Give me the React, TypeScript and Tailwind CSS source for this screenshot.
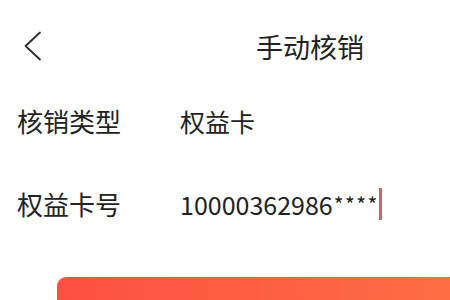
import React from 'react';

function BackIcon() {
    return (
        <svg width="20" height="30" viewBox="0 0 20 30" fill="none">
            <polyline points="17,1.5 2.5,15 17,28.5" stroke="#2b2b2b" strokeWidth="1.8" strokeLinecap="round" strokeLinejoin="round" />
        </svg>
    );
}

export default function App() {
    return (
        <div className="w-[450px] h-[300px] overflow-hidden bg-white">
            <div
                className="w-[620px] text-[#222]"
                style={{ fontFamily: '"Noto Sans CJK SC", "Noto Sans", sans-serif' }}
            >
                {/* header */}
                <div className="relative h-[92px] flex items-center justify-center">
                    <button className="absolute left-[23px] top-[31px]">
                        <BackIcon />
                    </button>
                    <h1 className="text-[27px] leading-none font-normal">手动核销</h1>
                </div>

                {/* form */}
                <div className="flex flex-col pl-[17px]">
                    <div className="h-[58px] flex items-center">
                        <span className="w-[163px] text-[26px] leading-none">核销类型</span>
                        <span className="text-[25px] leading-none">权益卡</span>
                    </div>
                    <div className="mt-[25px] h-[58px] flex items-center">
                        <span className="w-[163px] text-[26px] leading-none">权益卡号</span>
                        <span className="text-[25px] leading-none flex items-center">
                            10000362986
                            <span className="text-[21px] tracking-[1.5px] ml-[1px]">****</span>
                            <span className="w-[3px] h-[32px] bg-[#c26870]" />
                        </span>
                    </div>
                </div>

                {/* submit */}
                <div className="px-[57px] mt-[44px]">
                    <button className="w-full h-[56px] rounded-[9px] bg-gradient-to-r from-[#fd4f42] to-[#ff7444]" />
                </div>
            </div>
        </div>
    );
}
